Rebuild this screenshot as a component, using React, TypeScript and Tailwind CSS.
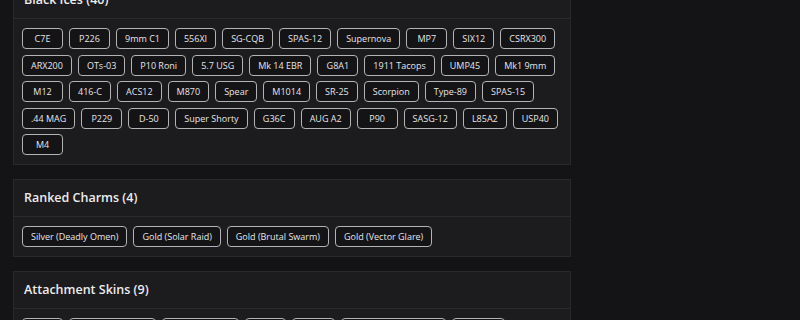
import React from "react";

type Section = {
  title: string;
  items: string[];
};

const sections: Section[] = [
  {
    title: "Black Ices",
    items: [
      "C7E", "P226", "9mm C1", "556XI", "SG-CQB", "SPAS-12", "Supernova", "MP7", "SIX12", "CSRX300",
      "ARX200", "OTs-03", "P10 Roni", "5.7 USG", "Mk 14 EBR", "G8A1", "1911 Tacops", "UMP45", "Mk1 9mm",
      "M12", "416-C", "ACS12", "M870", "Spear", "M1014", "SR-25", "Scorpion", "Type-89", "SPAS-15",
      ".44 MAG", "P229", "D-50", "Super Shorty", "G36C", "AUG A2", "P90", "SASG-12", "L85A2", "USP40",
      "M4",
    ],
  },
  {
    title: "Ranked Charms",
    items: ["Silver (Deadly Omen)", "Gold (Solar Raid)", "Gold (Brutal Swarm)", "Gold (Vector Glare)"],
  },
  {
    title: "Attachment Skins",
    items: ["Gold", "Black Ice (Scope)", "Diamond Grip", "Ruby", "Topaz", "Obsidian Flash Hider", "Emerald", "Sapphire", "Onyx"],
  },
];

function Tag({ label }: { label: string }) {
  return (
    <span className="h-[21px] min-w-[41px] px-[8px] flex items-center justify-center rounded-[4px] border-[1.5px] border-[#b3b3b3] bg-[#141316] text-[9px] leading-none text-[#e6e6e6] whitespace-nowrap">
      {label}
    </span>
  );
}

function SectionCard({ section }: { section: Section }) {
  return (
    <div className="w-[558px] border border-[#29282b] bg-[#1c1b1e]">
      <div className="h-[37px] flex items-center px-[10px] border-b border-[#2a292c]">
        <h2 className="text-[12.5px] font-semibold text-[#ececec]">
          {section.title} ({section.items.length})
        </h2>
      </div>
      <div className="flex flex-wrap gap-x-[6px] gap-y-[5.5px] pt-[9px] pb-[8.5px] px-[8px]">
        {section.items.map((item) => (
          <Tag key={item} label={item} />
        ))}
      </div>
    </div>
  );
}

export default function App() {
  return (
    <div
      className="h-[320px] overflow-hidden bg-[#141316] pl-[13px]"
      style={{ fontFamily: '"Open Sans", "Liberation Sans", sans-serif' }}
    >
      <div className="-mt-[19px] flex flex-col gap-[14.5px]">
        {sections.map((s) => (
          <SectionCard key={s.title} section={s} />
        ))}
      </div>
    </div>
  );
}
